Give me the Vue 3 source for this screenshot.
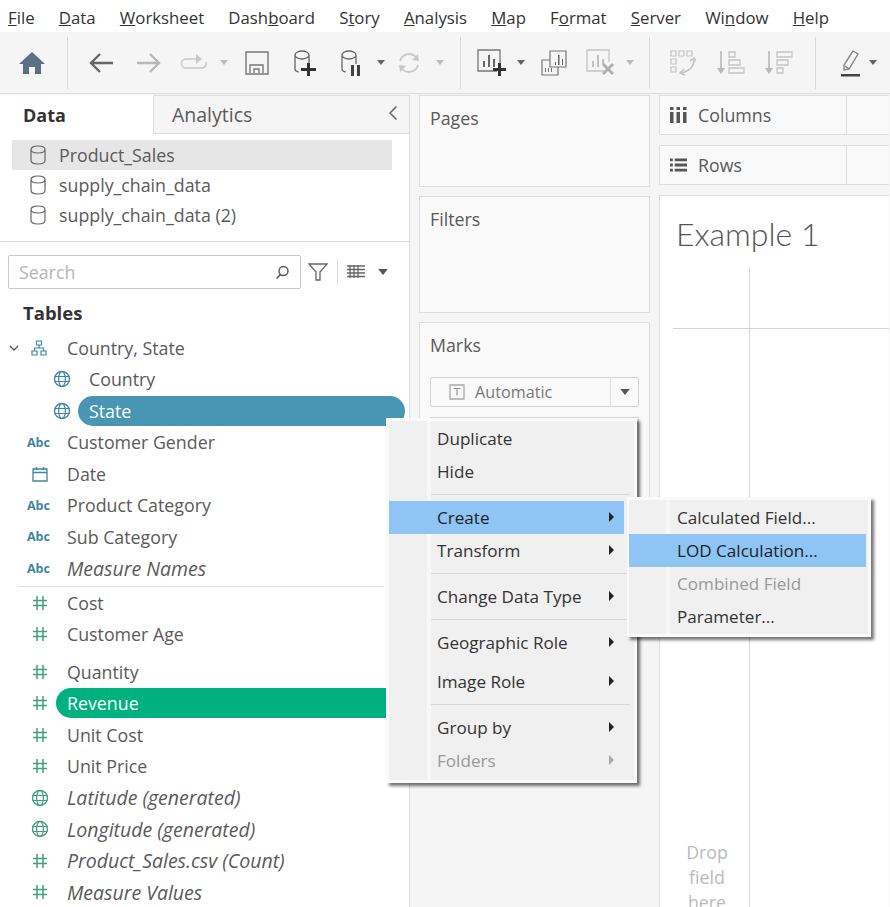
<script setup>
const menus = [
  { pre: '', key: 'F', post: 'ile' },
  { pre: '', key: 'D', post: 'ata' },
  { pre: '', key: 'W', post: 'orksheet' },
  { pre: 'Dash', key: 'b', post: 'oard' },
  { pre: 'S', key: 't', post: 'ory' },
  { pre: '', key: 'A', post: 'nalysis' },
  { pre: '', key: 'M', post: 'ap' },
  { pre: 'F', key: 'o', post: 'rmat' },
  { pre: '', key: 'S', post: 'erver' },
  { pre: 'Wi', key: 'n', post: 'dow' },
  { pre: '', key: 'H', post: 'elp' }
]

const sources = ['Product_Sales', 'supply_chain_data', 'supply_chain_data (2)']

const dims = [
  { name: 'Customer Gender', icon: 'abc' },
  { name: 'Date', icon: 'cal' },
  { name: 'Product Category', icon: 'abc' },
  { name: 'Sub Category', icon: 'abc' },
  { name: 'Measure Names', icon: 'abc', italic: true }
]

const measures = [
  { name: 'Cost', icon: 'hash' },
  { name: 'Customer Age', icon: 'hash' },
  { name: 'Quantity', icon: 'hash', gapTop: true },
  { name: 'Revenue', icon: 'hash', pill: true },
  { name: 'Unit Cost', icon: 'hash' },
  { name: 'Unit Price', icon: 'hash' },
  { name: 'Latitude (generated)', icon: 'globe', italic: true },
  { name: 'Longitude (generated)', icon: 'globe', italic: true },
  { name: 'Product_Sales.csv (Count)', icon: 'hash', italic: true },
  { name: 'Measure Values', icon: 'hash', italic: true }
]

const fieldMenu = [
  { label: 'Duplicate' },
  { label: 'Hide', sep: true },
  { label: 'Create', arrow: true, active: true },
  { label: 'Transform', arrow: true, sep: true },
  { label: 'Change Data Type', arrow: true, sep: true },
  { label: 'Geographic Role', arrow: true, clipped: true },
  { label: 'Image Role', arrow: true, sep: true },
  { label: 'Group by', arrow: true },
  { label: 'Folders', arrow: true, disabled: true }
]

const createMenu = [
  { label: 'Calculated Field...' },
  { label: 'LOD Calculation...', active: true },
  { label: 'Combined Field', disabled: true },
  { label: 'Parameter...' }
]
</script>

<template>
  <div class="app">
    <svg class="defs" width="0" height="0">
      <symbol id="db" viewBox="0 0 16 20">
        <path d="M1 4.500C1 2.500 4 1 8 1s7 1.500 7 3.500v11C15 17.500 12 19 8 19s-7-1.500-7-3.500z M1 4.500C1 6.500 4 8 8 8s7-1.500 7-3.500" fill="none" stroke="#666" stroke-width="1.200" />
      </symbol>
      <symbol id="globe" viewBox="0 0 18 18">
        <circle cx="9" cy="9" r="7.500" fill="none" stroke="currentColor" stroke-width="1.400" />
        <ellipse cx="9" cy="9" rx="3.400" ry="7.500" fill="none" stroke="currentColor" stroke-width="1.200" />
        <path d="M1.500 6.500h15M1.500 11.500h15" stroke="currentColor" stroke-width="1.200" />
      </symbol>
      <symbol id="hash" viewBox="0 0 16 16">
        <path d="M5 1v14M11 1v14M1 5.500h14M1 10.500h14" stroke="#3f9f7f" stroke-width="1.500" fill="none" />
      </symbol>
      <symbol id="cal" viewBox="0 0 16 16">
        <path d="M1 3h14v12H1z M1 6.500h14 M4.500 1v3 M11.500 1v3" stroke="#3f85a3" stroke-width="1.300" fill="none" />
      </symbol>
      <symbol id="caret" viewBox="0 0 8 5">
        <path d="M0 0h8L4 5z" fill="currentColor" />
      </symbol>
    </svg>

    <nav class="menubar">
      <span v-for="m in menus" :key="m.pre + m.key + m.post">{{ m.pre }}<u>{{ m.key }}</u>{{ m.post }}</span>
    </nav>

    <div class="toolbar">
      <svg class="t-home" width="26" height="24" viewBox="0 0 26 24"><path d="M13 1 26 13h-4v10h-6v-7h-6v7H4V13H0z" fill="#5b6f85" /></svg>
      <i class="tsep t-s1"></i>
      <svg class="t-back" width="26" height="24" viewBox="0 0 26 24"><path d="M25 12H3M12 3l-9 9 9 9" fill="none" stroke="#666" stroke-width="2.400" /></svg>
      <svg class="t-fwd" width="26" height="24" viewBox="0 0 26 24"><path d="M1 12h22M14 3l9 9-9 9" fill="none" stroke="#b8b8b8" stroke-width="2.400" /></svg>
      <svg class="t-redo" width="28" height="24" viewBox="0 0 28 24"><path d="M16 8H6a4.500 4.500 0 0 0 0 9h16a4.500 4.500 0 0 0 4-6" fill="none" stroke="#c8c8c8" stroke-width="1.500" /><path d="M16 3l6 5-6 5z" fill="#c8c8c8" /></svg>
      <svg class="t-car1 light" width="8" height="5"><use href="#caret" /></svg>
      <svg class="t-save" width="24" height="24" viewBox="0 0 24 24"><path d="M1 1h22v22H1z" fill="none" stroke="#777" stroke-width="1.400" /><path d="M5 22v-8h13v8M9 22v-4h5v4" fill="none" stroke="#777" stroke-width="1.400" /></svg>
      <svg class="t-dba" width="24" height="26" viewBox="0 0 24 26"><path d="M2 5c0-2 3-4 7-4s7 2 7 4v9M2 5c0 2 3 4 7 4s7-2 7-4M2 5v14c0 1.500 1.500 2.500 3.500 3" fill="none" stroke="#666" stroke-width="1.300" /><path d="M14 13h3v5h6v3h-6v5h-3v-5H8v-3h6z" fill="#333" /></svg>
      <svg class="t-dbp" width="24" height="26" viewBox="0 0 24 26"><path d="M2 5c0-2 3-4 7-4s7 2 7 4v9M2 5c0 2 3 4 7 4s7-2 7-4M2 5v14c0 1.500 1.500 2.500 3.500 3" fill="none" stroke="#666" stroke-width="1.300" /><path d="M11 15h3v11h-3zM17 15h3v11h-3z" fill="#444" /></svg>
      <svg class="t-car2" width="8" height="5"><use href="#caret" /></svg>
      <svg class="t-ref" width="24" height="24" viewBox="0 0 24 24"><path d="M3 10a9.500 9.500 0 0 1 16-4M21 14a9.500 9.500 0 0 1-16 4" fill="none" stroke="#c8c8c8" stroke-width="1.800" /><path d="M15 9l7 1-1-7zM9 15l-7-1 1 7z" fill="#c8c8c8" /></svg>
      <svg class="t-car3 light" width="8" height="5"><use href="#caret" /></svg>
      <i class="tsep t-s2"></i>
      <svg class="t-add" width="30" height="28" viewBox="0 0 30 28"><path d="M20 22H1V1h22v14" fill="none" stroke="#777" stroke-width="1.300" /><path d="M6 12h2v6H6zM11 6h2v12h-2zM16 10h2v8h-2z" fill="#666" /><path d="M21 14h3v5h5v3h-5v5h-3v-5h-5v-3h5z" fill="#333" /></svg>
      <svg class="t-car4" width="8" height="5"><use href="#caret" /></svg>
      <svg class="t-dup" width="26" height="26" viewBox="0 0 26 26"><path d="M9 1h16v16H9z" fill="#f5f5f5" stroke="#777" stroke-width="1.200" /><path d="M14 12h1v3h-1zM17 5h1.500v10H17zM21 9h1v6h-1z" fill="#666" /><path d="M9 10H1v15h16v-8" fill="none" stroke="#777" stroke-width="1.200" /><path d="M4 18h1v4H4zM7 18h1v4H7zM10 18h1v4h-1z" fill="#777" /></svg>
      <svg class="t-clr" width="30" height="28" viewBox="0 0 30 28"><path d="M18 22H1V1h22v12" fill="none" stroke="#c4c4c4" stroke-width="1.300" /><path d="M6 12h2v6H6zM11 6h2v12h-2zM16 10h2v5h-2z" fill="#c0c0c0" /><path d="M17 15l10 10M27 15 17 25" stroke="#b0b0b0" stroke-width="3" /></svg>
      <svg class="t-car5 light" width="8" height="5"><use href="#caret" /></svg>
      <i class="tsep t-s3"></i>
      <svg class="t-swap" width="26" height="26" viewBox="0 0 26 26" fill="none" stroke="#c4c4c4" stroke-width="1.200"><path d="M1 1h5v5H1zM9 1h5v5H9zM17 1h5v5h-5zM1 9h5v5H1zM1 17h5v5H1z" /><path d="M24 10c0 6-4 11-13 13" stroke-width="1.600" /><path d="M20 11l4-3 3 4M14 19l-4 4 5 2" stroke-width="1.600" /></svg>
      <svg class="t-asc" width="28" height="26" viewBox="0 0 28 26" fill="none" stroke="#c4c4c4" stroke-width="1.300"><path d="M4 1v21" stroke="#b8b8b8" stroke-width="1.600" /><path d="M0 18h8l-4 6z" fill="#b8b8b8" stroke="none" /><path d="M12 2h6v5h-6zM12 10h11v5H12zM12 18h15v5H12z" /></svg>
      <svg class="t-desc" width="28" height="26" viewBox="0 0 28 26" fill="none" stroke="#c4c4c4" stroke-width="1.300"><path d="M4 1v21" stroke="#b8b8b8" stroke-width="1.600" /><path d="M0 18h8l-4 6z" fill="#b8b8b8" stroke="none" /><path d="M12 2h15v5H12zM12 10h11v5H12zM12 18h6v5h-6z" /></svg>
      <i class="tsep t-s4"></i>
      <svg class="t-pen" width="24" height="28" viewBox="0 0 24 28"><path d="M15 2l5 3-9 15-5 1 0-5z M7 17l4 3" fill="none" stroke="#888" stroke-width="1.400" /><path d="M3 25h19v2.500H3z" fill="#444" /></svg>
      <svg class="t-car6" width="8" height="5"><use href="#caret" /></svg>
    </div>

    <main class="workspace">
      <aside class="side">
        <div class="tabs">
          <div class="tab tab-on">Data</div>
          <div class="tab">
            Analytics
            <svg class="collapse" width="10" height="16" viewBox="0 0 10 16"><path d="M8.500 1.500 2 8l6.500 6.500" fill="none" stroke="#666" stroke-width="1.500" /></svg>
          </div>
        </div>

        <ul class="sources">
          <li v-for="(s, i) in sources" :key="s" :class="{ picked: i === 0 }">
            <svg width="16" height="20"><use href="#db" /></svg>
            {{ s }}
          </li>
        </ul>

        <div class="searchrow">
          <div class="search">
            <span>Search</span>
            <svg width="15" height="15" viewBox="0 0 15 15"><circle cx="8.500" cy="6" r="4.500" fill="none" stroke="#555" stroke-width="1.400" /><path d="M5.500 9.500 1.500 13.500" stroke="#555" stroke-width="1.600" /></svg>
          </div>
          <svg class="funnel" width="20" height="20" viewBox="0 0 20 20"><path d="M1 2h18l-7 8v8H8v-8z" fill="none" stroke="#666" stroke-width="1.300" /></svg>
          <i class="ssep"></i>
          <svg class="listview" width="18" height="14" viewBox="0 0 18 14"><path d="M0 1h18M0 4.500h18M0 8h18M0 11.500h18M3 0v13M7 0v13M11 0v13" stroke="#666" stroke-width="1.300" fill="none" /></svg>
          <svg class="listcaret" width="10" height="6"><use href="#caret" /></svg>
        </div>

        <h3 class="tables">Tables</h3>

        <div class="field">
          <svg class="chev" width="10" height="6" viewBox="0 0 10 6"><path d="M1 1l4 4 4-4" fill="none" stroke="#555" stroke-width="1.300" /></svg>
          <svg class="hier" width="16" height="16" viewBox="0 0 16 16"><path d="M5.500 1h5v4h-5zM1 11h5v4H1zM10 11h5v4h-5zM8 5v3M3.500 11V8h9v3" fill="none" stroke="#3f85a3" stroke-width="1.200" /></svg>
          <span>Country, State</span>
        </div>
        <div class="field nested">
          <svg class="blue" width="18" height="18"><use href="#globe" /></svg>
          <span>Country</span>
        </div>
        <div class="field nested">
          <svg class="blue" width="18" height="18"><use href="#globe" /></svg>
          <span class="pill pill-blue">State</span>
        </div>

        <div v-for="f in dims" :key="f.name" class="field" :class="{ ital: f.italic }">
          <span v-if="f.icon === 'abc'" class="abc">Abc</span>
          <span v-else class="ico"><svg width="16" height="16"><use href="#cal" /></svg></span>
          <span class="fname">{{ f.name }}</span>
        </div>

        <hr class="split" />

        <div v-for="f in measures" :key="f.name" class="field" :class="{ ital: f.italic, gaptop: f.gapTop }">
          <span class="ico">
            <svg v-if="f.icon === 'hash'" width="16" height="16"><use href="#hash" /></svg>
            <svg v-else class="green" width="18" height="18"><use href="#globe" /></svg>
          </span>
          <span class="fname" :class="{ 'pill pill-green': f.pill }">{{ f.name }}</span>
        </div>
      </aside>

      <section class="cards">
        <div class="card pages">Pages</div>
        <div class="card filters">Filters</div>
        <div class="card marks">
          Marks
          <div class="marktype">
            <svg width="16" height="16" viewBox="0 0 16 16"><path d="M1 1h14v14H1z" fill="none" stroke="#aaa" stroke-width="1.300" /><path d="M4.500 4.500h7M8 4.500v7" stroke="#999" stroke-width="1.200" /></svg>
            <span>Automatic</span>
            <b><svg width="10" height="6"><use href="#caret" /></svg></b>
          </div>
          <div class="markgrid"></div>
        </div>
      </section>

      <section class="view">
        <div class="shelf">
          <div class="shelf-label">
            <svg width="17" height="16" viewBox="0 0 17 16"><path d="M0 5h3.500v11H0zM6.500 5H10v11H6.500zM13 5h3.500v11H13z" fill="#555" /><path d="M0 0h3.500v3H0zM6.500 0H10v3H6.500zM13 0h3.500v3H13z" fill="#555" /></svg>
            Columns
          </div>
        </div>
        <div class="shelf">
          <div class="shelf-label">
            <svg width="17" height="16" viewBox="0 0 18 16"><path d="M0 1h3v3H0zM5 1h13v3H5zM0 6.500h3v3H0zM5 6.500h13v3H5zM0 12h3v3H0zM5 12h13v3H5z" fill="#555" /></svg>
            Rows
          </div>
        </div>
        <div class="sheet">
          <h2>Example 1</h2>
          <div class="axes">
            <div class="drop">Drop field here</div>
          </div>
        </div>
      </section>
    </main>

    <div class="popup field-menu">
      <template v-for="item in fieldMenu" :key="item.label">
        <div class="mi" :class="{ on: item.active, off: item.disabled, cut: item.clipped }">
          {{ item.label }}
          <i v-if="item.arrow" class="arrow"></i>
        </div>
        <div v-if="item.sep" class="msep"></div>
      </template>
    </div>

    <div class="popup sub-menu">
      <div v-for="item in createMenu" :key="item.label" class="mi" :class="{ on: item.active, off: item.disabled }">
        {{ item.label }}
      </div>
    </div>
  </div>
</template>

<style>
html, body {
  margin: 0;
  background: #f5f5f5;
}
</style>

<style scoped>
.app {
  position: relative;
  width: 890px;
  height: 907px;
  overflow: hidden;
  display: flex;
  flex-direction: column;
  background: #f5f5f5;
  font-family: "Open Sans", "Liberation Sans", sans-serif;
  color: #5a5a5a;
}
.defs {
  position: absolute;
}
.menubar {
  height: 32px;
  box-sizing: border-box;
  padding: 3px 0 0 8px;
  flex: none;
  background: #fff;
  display: flex;
  align-items: center;
  gap: 24.200px;
  font-size: 16.800px;
  color: #333;
}
.toolbar {
  height: 62px;
  flex: none;
  display: flex;
  align-items: center;
  border-bottom: 1px solid #ddd;
  box-sizing: border-box;
  color: #666;
}
.toolbar svg {
  flex: none;
}
.toolbar .light {
  color: #bbb;
}
.tsep {
  width: 1px;
  height: 52px;
  background: #d9d9d9;
  flex: none;
}
.t-home { margin-left: 19px; }
.t-s1 { margin-left: 22px; }
.t-back { margin-left: 20px; }
.t-fwd { margin-left: 22px; }
.t-redo { margin-left: 18px; }
.t-car1 { margin-left: 12px; }
.t-save { margin-left: 17px; }
.t-dba { margin-left: 24px; }
.t-dbp { margin-left: 23px; }
.t-car2 { margin-left: 13px; }
.t-ref { margin-left: 12px; }
.t-car3 { margin-left: 15px; }
.t-s2 { margin-left: 16px; }
.t-add { margin-left: 16px; }
.t-car4 { margin-left: 10px; }
.t-dup { margin-left: 16px; }
.t-clr { margin-left: 19px; }
.t-car5 { margin-left: 10px; }
.t-s3 { margin-left: 15px; }
.t-swap { margin-left: 20px; }
.t-asc { margin-left: 21px; }
.t-desc { margin-left: 20px; }
.t-s4 { margin-left: 22px; }
.t-pen { margin-left: 22px; }
.t-car6 { margin-left: 7px; }

.workspace {
  flex: 1;
  min-height: 0;
  display: grid;
  grid-template-columns: 410px 231px 230px;
  column-gap: 9px;
  padding-top: 1px;
}
.side {
  background: #fff;
  border-right: 1px solid #ddd;
  overflow: hidden;
  font-size: 17.800px;
}
.tabs {
  display: grid;
  grid-template-columns: 153px 1fr;
  height: 39px;
}
.tab {
  position: relative;
  display: flex;
  align-items: center;
  padding-left: 18px;
  background: #f5f5f5;
  border-bottom: 1px solid #ddd;
  border-top: 1px solid #ddd;
  border-left: 1px solid #ddd;
  font-size: 19.500px;
  box-sizing: border-box;
}
.tab-on {
  background: #fff;
  border: 0;
  padding-left: 23px;
  font-size: 18px;
  font-weight: 700;
  color: #333;
}
.collapse {
  position: absolute;
  right: 11px;
  top: 9px;
}
.sources {
  list-style: none;
  margin: 6px 0 0;
  padding: 0;
  height: 102px;
  box-sizing: border-box;
  border-bottom: 1px solid #ddd;
}
.sources li {
  height: 30px;
  width: 380px;
  margin-left: 12px;
  display: flex;
  align-items: center;
  gap: 13px;
  padding-left: 18px;
  box-sizing: border-box;
}
.sources .picked {
  background: #e6e6e6;
}
.searchrow {
  display: flex;
  align-items: center;
  margin-top: 13px;
  padding-left: 8px;
}
.search {
  width: 293px;
  height: 34px;
  box-sizing: border-box;
  border: 1px solid #c8c8c8;
  border-radius: 2px;
  display: flex;
  align-items: center;
  justify-content: space-between;
  padding: 0 10px;
  color: #b5b5b5;
}
.funnel { margin-left: 7px; }
.ssep {
  width: 1px;
  height: 26px;
  background: #ddd;
  margin-left: 9px;
}
.listview { margin-left: 9px; }
.listcaret {
  margin-left: 13px;
  color: #555;
}
.tables {
  margin: 6px 0 0;
  padding-left: 23px;
  height: 37px;
  line-height: 35px;
  font-size: 18.500px;
  font-weight: 700;
  color: #333;
}
.field {
  height: 31.500px;
  display: flex;
  align-items: center;
  padding-left: 27px;
  white-space: nowrap;
}
.chev {
  position: absolute;
  left: 9px;
}
.hier {
  margin-left: 4px;
  margin-right: 20px;
}
.nested {
  padding-left: 53px;
  gap: 18px;
}
.nested .pill-blue {
  margin-left: -11px;
}
.abc {
  width: 40px;
  flex: none;
  font-size: 12.500px;
  font-style: normal;
  font-weight: 700;
  color: #3f85a3;
}
.ico {
  width: 40px;
  flex: none;
  display: flex;
  padding-left: 5px;
  box-sizing: border-box;
}
.blue { color: #3f85a3; }
.green { color: #3f9f7f; margin-left: -1px; }
.ital .fname {
  font-style: italic;
  font-size: 19.500px;
}
.gaptop {
  margin-top: 6px;
}
.split {
  margin: 2px 25px 0 19px;
  border: 0;
  border-top: 1px solid #ddd;
}
.pill {
  height: 30px;
  display: flex;
  align-items: center;
  color: #fff;
}
.pill-blue {
  width: 316px;
  padding-left: 11px;
  background: #4996b2;
  border-radius: 15px;
}
.pill-green {
  width: 330px;
  margin-left: -11px;
  padding-left: 11px;
  background: #00b180;
  border-radius: 15px 0 0 15px;
}

.cards {
  display: flex;
  flex-direction: column;
  gap: 9px;
  font-size: 17.800px;
  line-height: 24px;
}
.card {
  box-sizing: border-box;
  border: 1px solid #ddd;
  background: #f9f9f9;
  padding: 10px;
}
.pages { height: 92px; }
.filters { height: 117px; }
.marks { height: 280px; }
.marktype {
  margin-top: 20px;
  height: 30px;
  box-sizing: border-box;
  border: 1px solid #d5d5d5;
  border-radius: 2px;
  display: flex;
  align-items: center;
  gap: 10px;
  padding-left: 18px;
  font-size: 16.200px;
  color: #777;
}
.marktype b {
  margin-left: auto;
  width: 27px;
  height: 100%;
  border-left: 1px solid #ddd;
  display: flex;
  align-items: center;
  justify-content: center;
  color: #555;
}
.markgrid {
  margin-top: 10px;
  height: 80px;
  border: 1px solid #d5d5d5;
}

.view {
  display: flex;
  flex-direction: column;
  gap: 10px;
  font-size: 17.800px;
}
.shelf {
  height: 40px;
  flex: none;
  border: 1px solid #ddd;
  border-right: 0;
  background: #f9f9f9;
  box-sizing: border-box;
}
.shelf-label {
  width: 187px;
  height: 100%;
  box-sizing: border-box;
  border-right: 1px solid #ddd;
  display: flex;
  align-items: center;
  gap: 11px;
  padding-left: 10px;
}
.sheet {
  flex: 1;
  background: #fff;
  border-left: 1px solid #ddd;
  border-top: 1px solid #ddd;
  padding: 18px 0 0 13px;
  display: flex;
  flex-direction: column;
  min-height: 0;
}
.sheet h2 {
  margin: 0 0 0 3px;
  height: 54px;
  font-size: 32px;
  line-height: 40px;
  font-weight: 300;
  font-family: Lato, "Open Sans", sans-serif;
  color: #555;
}
.axes {
  position: relative;
  flex: 1;
  display: flex;
}
.axes::before {
  content: "";
  position: absolute;
  left: 76px;
  top: 0;
  bottom: 0;
  width: 1px;
  background: #d5d5d5;
}
.axes::after {
  content: "";
  position: absolute;
  left: 0;
  right: 0;
  top: 60px;
  height: 1px;
  background: #d5d5d5;
}
.drop {
  align-self: flex-end;
  width: 46px;
  height: 75px;
  margin: 0 0 -8px 11px;
  text-align: center;
  line-height: 25px;
  color: #bbb;
}

.popup {
  position: absolute;
  box-sizing: border-box;
  background: #f0f0f0;
  border: 3px solid #fafafa;
  box-shadow: 3px 3px 3px rgba(0, 0, 0, 0.55);
  font-size: 17.100px;
  color: #333;
}
.popup::before {
  content: "";
  position: absolute;
  top: 0;
  bottom: 0;
  width: 4px;
  background: #f7f7f7;
}
.field-menu {
  left: 386px;
  top: 418px;
  width: 251px;
  height: 365px;
  padding: 1px 10px 0 0;
}
.field-menu::before {
  left: 38px;
}
.sub-menu {
  left: 627px;
  top: 497px;
  width: 244px;
  height: 140px;
  padding: 1px 2px 0 0;
  border-width: 3px 3px 3px 2px;
  z-index: 1;
}
.sub-menu::before {
  left: 37px;
}
.mi {
  position: relative;
  height: 33px;
  display: flex;
  align-items: center;
  padding-left: 48px;
  z-index: 1;
}
.sub-menu .mi {
  padding-left: 48px;
}
.mi.on {
  background: #8ec5f5;
  color: #222;
}
.mi.off {
  color: #999;
}
.mi.cut {
  margin-bottom: 6px;
}
.arrow {
  position: absolute;
  right: 10px;
  top: 11px;
  border-left: 5px solid #222;
  border-top: 5px solid transparent;
  border-bottom: 5px solid transparent;
}
.off .arrow {
  border-left-color: #aaa;
}
.msep {
  height: 1px;
  margin: 6px -6px 6px 42px;
  background: #d8d8d8;
}
</style>
